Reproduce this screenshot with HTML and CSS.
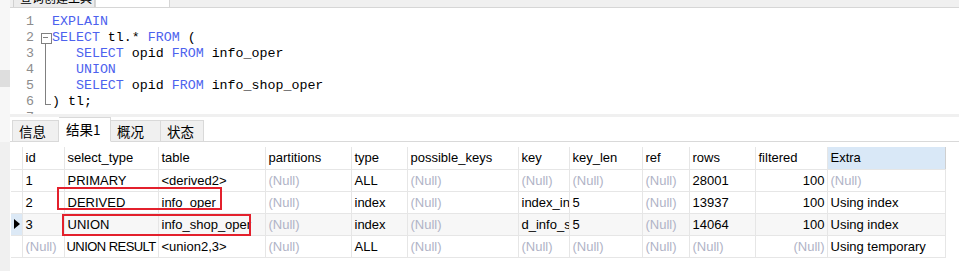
FILE: index.html
```html
<!DOCTYPE html>
<html>
  <head>
    <meta charset="utf-8">
    <title>查询 - EXPLAIN</title>
    <link rel="stylesheet" href="styles.css">
  </head>
  <body>
    <div class="app">
      <div class="side">
        <div class="grip"></div>
        <div class="side-low"></div>
      </div>
      <div class="main">
        <div class="topbar">
          <div class="ttab"><span>查询创建工具</span></div>
          <div class="ttab active"><span>查询编辑器</span></div>
        </div>

        <div class="editor">
          <div class="line"><span class="num">1</span><span class="fold"></span><span class="code"><b>EXPLAIN</b></span></div>
          <div class="line"><span class="num">2</span><span class="fold open"></span><span class="code"><b>SELECT</b> tl.* <b>FROM</b> (</span></div>
          <div class="line"><span class="num">3</span><span class="fold mid"></span><span class="code">   <b>SELECT</b> opid <b>FROM</b> info_oper</span></div>
          <div class="line"><span class="num">4</span><span class="fold mid"></span><span class="code">   <b>UNION</b></span></div>
          <div class="line"><span class="num">5</span><span class="fold mid"></span><span class="code">   <b>SELECT</b> opid <b>FROM</b> info_shop_oper</span></div>
          <div class="line"><span class="num">6</span><span class="fold end"></span><span class="code">) tl;</span></div>
          <div class="line"><span class="num">7</span><span class="fold"></span><span class="code"></span></div>
        </div>

        <div class="split"></div>

        <div class="tabs">
          <div class="tab first">信息</div>
          <div class="tab active">结果1</div>
          <div class="tab">概况</div>
          <div class="tab last">状态</div>
        </div>

        <div class="result">
          <div class="grid-box">
            <table class="grid">
              <colgroup>
                <col style="width:11px"><col style="width:42px"><col style="width:94px">
                <col style="width:107px"><col style="width:86px"><col style="width:56px">
                <col style="width:111px"><col style="width:51px"><col style="width:73px">
                <col style="width:47px"><col style="width:66px"><col style="width:72px">
                <col style="width:118px">
              </colgroup>
              <thead>
                <tr>
                  <th class="ind"></th><th>id</th><th>select_type</th><th>table</th><th>partitions</th>
                  <th>type</th><th>possible_keys</th><th>key</th><th>key_len</th><th>ref</th>
                  <th>rows</th><th>filtered</th><th class="sel">Extra</th>
                </tr>
              </thead>
              <tbody>
                <tr>
                  <td class="ind"></td><td>1</td><td>PRIMARY</td><td>&lt;derived2&gt;</td><td class="null">(Null)</td>
                  <td>ALL</td><td class="null">(Null)</td><td class="null">(Null)</td><td class="null">(Null)</td><td class="null">(Null)</td>
                  <td>28001</td><td class="num">100</td><td class="null">(Null)</td>
                </tr>
                <tr>
                  <td class="ind"></td><td>2</td><td>DERIVED</td><td>info_oper</td><td class="null">(Null)</td>
                  <td>index</td><td class="null">(Null)</td><td>index_info_oper</td><td>5</td><td class="null">(Null)</td>
                  <td>13937</td><td class="num">100</td><td>Using index</td>
                </tr>
                <tr class="current">
                  <td class="ind"><span class="arrow"></span></td><td>3</td><td>UNION</td><td>info_shop_oper</td><td class="null">(Null)</td>
                  <td>index</td><td class="null">(Null)</td><td>d_info_shop_oper</td><td>5</td><td class="null">(Null)</td>
                  <td>14064</td><td class="num">100</td><td>Using index</td>
                </tr>
                <tr>
                  <td class="ind"></td><td class="null">(Null)</td><td class="tight">UNION RESULT</td><td>&lt;union2,3&gt;</td><td class="null">(Null)</td>
                  <td>ALL</td><td class="null">(Null)</td><td class="null">(Null)</td><td class="null">(Null)</td><td class="null">(Null)</td>
                  <td class="null">(Null)</td><td class="null num">(Null)</td><td>Using temporary</td>
                </tr>
              </tbody>
            </table>
            <div class="mark mark-derived"></div>
            <div class="mark mark-union"></div>
          </div>
        </div>
      </div>
    </div>
  </body>
</html>
```

FILE: styles.css
```css
* {
  margin: 0;
  padding: 0;
  box-sizing: border-box;
}

html,
body {
  height: 100%;
  background: #fff;
  overflow: hidden;
}

body {
  font-family: "Liberation Sans", "Noto Sans CJK SC", sans-serif;
  font-size: 13px;
  color: #000;
}

.app {
  display: flex;
  height: 271px;
}

/* 左侧窄条 */
.side {
  width: 10px;
  display: flex;
  flex-direction: column;
  background: #f7f7f7;
}

.side .grip {
  height: 17px;
  margin-top: 70px;
  background: #dedede;
}

.side .side-low {
  flex: 1;
  margin-top: 55px;
  background: #f0f0f0;
}

.main {
  flex: 1;
  display: flex;
  flex-direction: column;
  min-width: 0;
}

/* 顶部查询页签 */
.topbar {
  height: 8px;
  display: flex;
  background: #f0f0f0;
  border-bottom: 1px solid #d6d6d6;
  padding-left: 3px;
  overflow: hidden;
}

.ttab {
  width: 82px;
  height: 8px;
  border: 1px solid #d0d0d0;
  border-top: 0;
  background: #ececec;
  overflow: hidden;
  font-family: "Noto Sans CJK SC", sans-serif;
  font-size: 12px;
  line-height: 14px;
  padding-left: 6px;
}

.ttab span {
  display: block;
  margin-top: -9px;
}

.ttab.active {
  width: 75px;
  height: 9px;
  background: #fff;
  border-color: #d6d6d6;
  color: #fff;
}

/* SQL 编辑器 */
.editor {
  height: 106px;
  padding-top: 6px;
  overflow: hidden;
  font-family: "Liberation Mono", monospace;
  font-size: 13.3px;
}

.line {
  display: flex;
  height: 16px;
  line-height: 16px;
  white-space: pre;
}

.line .num {
  width: 24px;
  text-align: right;
  color: #8c8c8c;
}

.line .fold {
  width: 18px;
  position: relative;
}

.line .code b {
  font-weight: normal;
  color: #4d62ee;
}

.fold.open::before {
  content: "";
  position: absolute;
  left: 7px;
  top: 3px;
  width: 9px;
  height: 9px;
  border: 1px solid #808080;
  background: #fff;
}

.fold.open::after {
  content: "";
  position: absolute;
  left: 9px;
  top: 7px;
  width: 5px;
  height: 1px;
  background: #808080;
}

.fold.open {
  background: linear-gradient(#808080, #808080) 11px 12px / 1px 4px no-repeat;
}

.fold.mid {
  background: linear-gradient(#808080, #808080) 11px 0 / 1px 16px no-repeat;
}

.fold.end {
  background:
    linear-gradient(#808080, #808080) 11px 0 / 1px 10px no-repeat,
    linear-gradient(#808080, #808080) 11px 10px / 6px 1px no-repeat;
}

.split {
  height: 3px;
  background: #f0f0f0;
}

/* 结果页签 */
.tabs {
  height: 25px;
  display: flex;
  align-items: flex-end;
  padding-left: 2px;
  border-bottom: 1px solid #d9d9d9;
  font-family: "Noto Sans CJK SC", sans-serif;
  font-size: 13.5px;
}

.tab {
  width: 50px;
  height: 22px;
  line-height: 20px;
  padding-left: 6px;
  margin-bottom: -1px;
  background: #f0f0f0;
  border: 1px solid #d9d9d9;
  border-left: 0;
  white-space: nowrap;
}

.tab.first {
  width: 47px;
  border-left: 1px solid #d9d9d9;
}

.tab.active {
  width: 52px;
  height: 25px;
  line-height: 23px;
  padding-left: 7px;
  background: #fff;
  border-bottom-color: #fff;
}

.tab.last {
  width: 43px;
}

/* 结果表格 */
.result {
  flex: 1;
  padding: 5px 0 0 1px;
  background: #fff;
}

.grid-box {
  position: relative;
  width: 934px;
}

.grid {
  border-collapse: collapse;
  table-layout: fixed;
  width: 934px;
}

.grid th,
.grid td {
  height: 22px;
  padding: 0 2px 0 3px;
  text-align: left;
  font-weight: normal;
  white-space: nowrap;
  overflow: hidden;
  border-right: 1px solid #e6e6e6;
  border-bottom: 1px solid #e6e6e6;
  line-height: 21px;
}

.grid th.sel {
  background: #d9e8f7;
  border-right-color: #cfcfcf;
}

.grid td.null {
  color: #b0b3c6;
}

.grid td.num {
  text-align: right;
  padding-right: 2px;
}

.grid td.tight {
  letter-spacing: -0.55px;
  padding-left: 2px;
}

.grid tr.current td {
  background: #f7f7f7;
}

.grid tr.current td.ind {
  background: #dce9f6;
}

.grid .ind {
  padding: 0;
}

.arrow {
  display: block;
  width: 0;
  height: 0;
  margin-left: 3px;
  border-top: 5px solid transparent;
  border-bottom: 5px solid transparent;
  border-left: 6px solid #000;
}

/* 红框标注 */
.mark {
  position: absolute;
  border: 2px solid #e3202c;
}

.mark-derived {
  left: 46px;
  top: 40px;
  width: 165px;
  height: 23px;
}

.mark-union {
  left: 51px;
  top: 67px;
  width: 189px;
  height: 22px;
}
```
